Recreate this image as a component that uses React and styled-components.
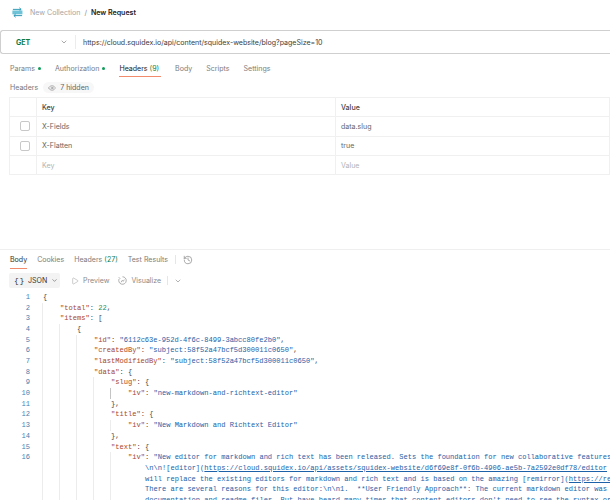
import React from 'react'
import styled, { createGlobalStyle } from 'styled-components'
import { ChevronDown, Eye, History, Play } from 'lucide-react'

const INDENT = 17

const requestTabs = [
  { label: 'Params', dot: true },
  { label: 'Authorization', dot: true },
  { label: 'Headers', count: '(9)', active: true },
  { label: 'Body' },
  { label: 'Scripts' },
  { label: 'Settings' },
]

const headerRows = [
  { key: 'X-Fields', value: 'data.slug' },
  { key: 'X-Flatten', value: 'true' },
]

const k = (text) => ({ type: 'key', text })
const s = (text) => ({ type: 'str', text })
const n = (text) => ({ type: 'num', text })
const p = (text) => ({ type: 'punct', text })

const codeLines = [
  { no: 1, depth: 0, parts: [p('{')] },
  { no: 2, depth: 1, parts: [k('"total"'), p(': '), n('22'), p(',')] },
  { no: 3, depth: 1, parts: [k('"items"'), p(': [')] },
  { no: 4, depth: 2, parts: [p('{')] },
  { no: 5, depth: 3, parts: [k('"id"'), p(': '), s('"6112c63e-952d-4f6c-8499-3abcc80fe2b0"'), p(',')] },
  { no: 6, depth: 3, parts: [k('"createdBy"'), p(': '), s('"subject:58f52a47bcf5d300011c0650"'), p(',')] },
  { no: 7, depth: 3, parts: [k('"lastModifiedBy"'), p(': '), s('"subject:58f52a47bcf5d300011c0650"'), p(',')] },
  { no: 8, depth: 3, parts: [k('"data"'), p(': {')] },
  { no: 9, depth: 4, parts: [k('"slug"'), p(': {')] },
  { no: 10, depth: 5, active: true, parts: [k('"iv"'), p(': '), s('"new-markdown-and-richtext-editor"')] },
  { no: 11, depth: 4, parts: [p('},')] },
  { no: 12, depth: 4, parts: [k('"title"'), p(': {')] },
  { no: 13, depth: 5, parts: [k('"iv"'), p(': '), s('"New Markdown and Richtext Editor"')] },
  { no: 14, depth: 4, parts: [p('},')] },
  { no: 15, depth: 4, parts: [k('"text"'), p(': {')] },
  {
    no: 16,
    depth: 5,
    parts: [
      k('"iv"'),
      p(': '),
      s('"New editor for markdown and rich text has been released. Sets the foundation for new collaborative features'),
    ],
  },
  {
    depth: 5,
    wrap: true,
    parts: [
      s('\\n\\n!'),
      s('[editor]('),
      { type: 'link', text: 'https://cloud.squidex.io/api/assets/squidex-website/d6f69e8f-0f6b-4906-ae5b-7a2592e0df78/editor' },
    ],
  },
  {
    depth: 5,
    wrap: true,
    parts: [
      s('will replace the existing editors for markdown and rich text and is based on the amazing [remirror]('),
      { type: 'link', text: 'https://remirror.io' },
    ],
  },
  {
    depth: 5,
    wrap: true,
    parts: [s('There are several reasons for this editor:\\n\\n1.  **User Friendly Approach**: The current markdown editor was')],
  },
  {
    depth: 5,
    wrap: true,
    parts: [s("documentation and readme files. But have heard many times that content editors don't need to see the syntax or")],
  },
]

export default function App() {
  return (
    <Page>
      <GlobalStyle />
      <TitleBar>
        <Logo viewBox="0 0 12 12" aria-hidden="true">
          <path d="M1 2.6h8.6M8 .9l2 1.7-2 1.7" fill="none" stroke="#1f8fb0" strokeWidth="1" />
          <rect x="0.4" y="3.8" width="11" height="4.2" fill="#6fc3d8" />
          <path d="M11 9.4H2.4M4 7.7l-2 1.7 2 1.7" fill="none" stroke="#1f8fb0" strokeWidth="1" />
        </Logo>
        <Crumb>New Collection</Crumb>
        <Slash>/</Slash>
        <CrumbCurrent>New Request</CrumbCurrent>
      </TitleBar>

      <UrlBar>
        <Method>
          GET
          <ChevronDown size={8} strokeWidth={1.5} color="#555" />
        </Method>
        <UrlText>https://cloud.squidex.io/api/content/squidex-website/blog?pageSize=10</UrlText>
      </UrlBar>

      <TabRow>
        {requestTabs.map((tab) => (
          <Tab key={tab.label} $active={tab.active}>
            {tab.label}
            {tab.count && <Count> {tab.count}</Count>}
            {tab.dot && <Dot />}
          </Tab>
        ))}
      </TabRow>

      <HeadersBar>
        <HeadersLabel>Headers</HeadersLabel>
        <HiddenPill>
          <Eye size={8} strokeWidth={1.5} color="#777" />7 hidden
        </HiddenPill>
      </HeadersBar>

      <Table>
        <HeadRow>
          <CheckCell />
          <HeadCell>Key</HeadCell>
          <HeadCell>Value</HeadCell>
        </HeadRow>
        {headerRows.map((row) => (
          <Row key={row.key}>
            <CheckCell>
              <Checkbox />
            </CheckCell>
            <BodyCell>{row.key}</BodyCell>
            <BodyCell>{row.value}</BodyCell>
          </Row>
        ))}
        <Row>
          <CheckCell />
          <BodyCell $placeholder>Key</BodyCell>
          <BodyCell $placeholder>Value</BodyCell>
        </Row>
      </Table>

      <Response>
        <ResponseTabs>
          <ResponseTab $active>Body</ResponseTab>
          <ResponseTab>Cookies</ResponseTab>
          <ResponseTab>
            Headers <Count>(27)</Count>
          </ResponseTab>
          <ResponseTab>Test Results</ResponseTab>
          <TabDivider />
          <History size={10} strokeWidth={1.3} color="#666" />
        </ResponseTabs>

        <Toolbar>
          <FormatButton>
            <BraceGlyph>{'{ }'}</BraceGlyph>
            JSON
            <ChevronDown size={7} strokeWidth={1.6} />
          </FormatButton>
          <ToolButton>
            <Play size={8} strokeWidth={1.3} />
            Preview
          </ToolButton>
          <ToolButton>
            <VisualizeIcon viewBox="0 0 12 12" aria-hidden="true">
              <path d="M6 1a5 5 0 1 1-4.6 3M1 1.6 3 3.8M4 8.4l1.6-2.6 1.4 1.4 1.4-2.4" fill="none" stroke="currentColor" strokeWidth="0.9" />
            </VisualizeIcon>
            Visualize
          </ToolButton>
          <TabDivider />
          <ChevronDown size={8} strokeWidth={1.5} color="#666" />
        </Toolbar>

        <Code>
          {codeLines.map((line, i) => (
            <CodeLine key={i}>
              <LineNo>{line.no}</LineNo>
              <Guides>
                {Array.from({ length: line.depth }, (_, d) => (
                  <Guide key={d} $active={line.active && d === line.depth - 1} />
                ))}
              </Guides>
              <CodeText $wrap={line.wrap}>
                {line.parts.map((part, j) => (
                  <Token key={j} $type={part.type}>
                    {part.text}
                  </Token>
                ))}
              </CodeText>
            </CodeLine>
          ))}
        </Code>
      </Response>
    </Page>
  )
}

const GlobalStyle = createGlobalStyle`
  html, body {
    margin: 0;
    background: #fff;
  }
`

const Page = styled.div`
  width: 610px;
  height: 500px;
  overflow: hidden;
  font-family: Inter, 'Liberation Sans', sans-serif;
  font-size: 7.05px;
  color: #6b6b6b;
`

const TitleBar = styled.div`
  height: 24px;
  padding-left: 12px;
  display: flex;
  align-items: center;
`

const Logo = styled.svg`
  width: 11px;
  height: 11px;
  margin-right: 7px;
`

const Crumb = styled.span`
  color: #a6a6a6;
`

const Slash = styled.span`
  margin: 0 4px;
  color: #8a8a8a;
`

const CrumbCurrent = styled.span`
  color: #222;
  font-weight: 600;
`

const UrlBar = styled.div`
  height: 24px;
  margin-top: 6px;
  border: 1px solid #cfcfcf;
  border-right: none;
  border-radius: 3px 0 0 3px;
  display: flex;
  align-items: center;
  box-sizing: border-box;
`

const Method = styled.div`
  width: 59px;
  height: 14px;
  padding-left: 15px;
  margin-right: 7px;
  border-right: 1px solid #ececec;
  display: flex;
  align-items: center;
  gap: 30px;
  color: #0f7b3f;
  font-weight: 700;
`

const UrlText = styled.div`
  color: #3d3d3d;
  white-space: nowrap;
`

const TabRow = styled.div`
  height: 24px;
  padding-left: 10px;
  display: flex;
  gap: 14px;
`

const Tab = styled.div`
  height: 18px;
  padding-top: 5px;
  padding-right: ${(p) => (p.$active ? '2px' : '0')};
  display: flex;
  align-items: center;
  white-space: pre;
  color: ${(p) => (p.$active ? '#222' : '#7d7d7d')};
  box-shadow: ${(p) => (p.$active ? 'inset 0 -1px 0 #f28b6b' : 'none')};
`

const Count = styled.span`
  color: #0f7b3f;
`

const Dot = styled.span`
  width: 3px;
  height: 3px;
  margin-left: 3px;
  border-radius: 50%;
  background: #0f9d58;
`

const HeadersBar = styled.div`
  height: 19px;
  padding-left: 10px;
  display: flex;
  align-items: center;
  gap: 5px;
`

const HeadersLabel = styled.span`
  color: #777;
`

const HiddenPill = styled.span`
  height: 11px;
  padding: 0 5px;
  display: flex;
  align-items: center;
  gap: 4px;
  border-radius: 6px;
  background: #f7f7f7;
  color: #666;
`

const Table = styled.div`
  margin-left: 9px;
  border-left: 1px solid #f0f0f0;
`

const Row = styled.div`
  height: 19.3px;
  box-sizing: border-box;
  display: grid;
  grid-template-columns: 27px 299px 1fr;
  border-bottom: 1px solid #f0f0f0;
`

const HeadRow = styled(Row)`
  height: 20.3px;
  border-top: 1px solid #f0f0f0;
`

const CheckCell = styled.div`
  display: flex;
  align-items: center;
  justify-content: center;
  border-right: 1px solid #f0f0f0;
  padding-left: 3px;
`

const Checkbox = styled.span`
  width: 10px;
  height: 10px;
  box-sizing: border-box;
  border: 1px solid #c8c8c8;
  border-radius: 2px;
`

const HeadCell = styled.div`
  padding-left: 5px;
  display: flex;
  align-items: center;
  color: #444;
  font-weight: 500;
  border-right: 1px solid #f0f0f0;
`

const BodyCell = styled.div`
  padding-left: 5px;
  display: flex;
  align-items: center;
  color: ${(p) => (p.$placeholder ? '#b3b3b3' : '#666')};
  border-right: 1px solid #f0f0f0;
`

const Response = styled.div`
  margin-top: 74px;
  border-top: 1px solid #efefef;
`

const ResponseTabs = styled.div`
  height: 19px;
  padding-left: 10px;
  display: flex;
  align-items: center;
  gap: 10px;
`

const ResponseTab = styled.div`
  height: 19px;
  display: flex;
  align-items: center;
  white-space: pre;
  color: ${(p) => (p.$active ? '#333' : '#7d7d7d')};
  box-shadow: ${(p) => (p.$active ? 'inset 0 -1px 0 #f28b6b' : 'none')};
`

const TabDivider = styled.span`
  width: 1px;
  height: 9px;
  margin: 0 -3px;
  background: #e6e6e6;
`

const Toolbar = styled.div`
  height: 15px;
  margin-top: 4px;
  padding-left: 9px;
  display: flex;
  align-items: center;
  gap: 9px;
`

const FormatButton = styled.div`
  width: 51px;
  height: 15px;
  flex: none;
  box-sizing: border-box;
  padding-left: 5px;
  margin-right: 2px;
  display: flex;
  align-items: center;
  gap: 3px;
  border-radius: 2px;
  background: #f3f3f3;
  color: #333;

  svg {
    flex: none;
    margin-left: 1px;
  }
`

const BraceGlyph = styled.span`
  width: 11px;
  flex: none;
  font-family: 'Liberation Mono', monospace;
  font-size: 8px;
  word-spacing: -4px;
  white-space: pre;
`

const ToolButton = styled.div`
  display: flex;
  align-items: center;
  gap: 4px;
  color: #8a8a8a;
`

const VisualizeIcon = styled.svg`
  width: 9px;
  height: 9px;
`

const Code = styled.div`
  margin-top: 3.7px;
  font-family: 'Liberation Mono', 'DejaVu Sans Mono', monospace;
  font-size: 7.07px;
`

const CodeLine = styled.div`
  height: 10.7px;
  line-height: 10.7px;
  display: flex;
  white-space: pre;
`

const LineNo = styled.span`
  width: 30px;
  flex: none;
  text-align: right;
  color: #3f7fb0;
  margin-right: 12px;
`

const Guides = styled.span`
  display: flex;
  flex: none;
`

const Guide = styled.span`
  width: ${INDENT}px;
  box-sizing: border-box;
  border-left: 1px solid ${(p) => (p.$active ? '#c4c4c4' : '#ececec')};
`

const CodeText = styled.span`
  padding-left: ${(p) => (p.$wrap ? INDENT + 1 : 1)}px;
`

const tokenColors = {
  key: '#a8452c',
  str: '#1d62a8',
  num: '#1f8a5b',
  punct: '#444',
  link: '#1d62a8',
}

const Token = styled.span`
  color: ${(p) => tokenColors[p.$type]};
  text-decoration: ${(p) => (p.$type === 'link' ? 'underline' : 'none')};
`
